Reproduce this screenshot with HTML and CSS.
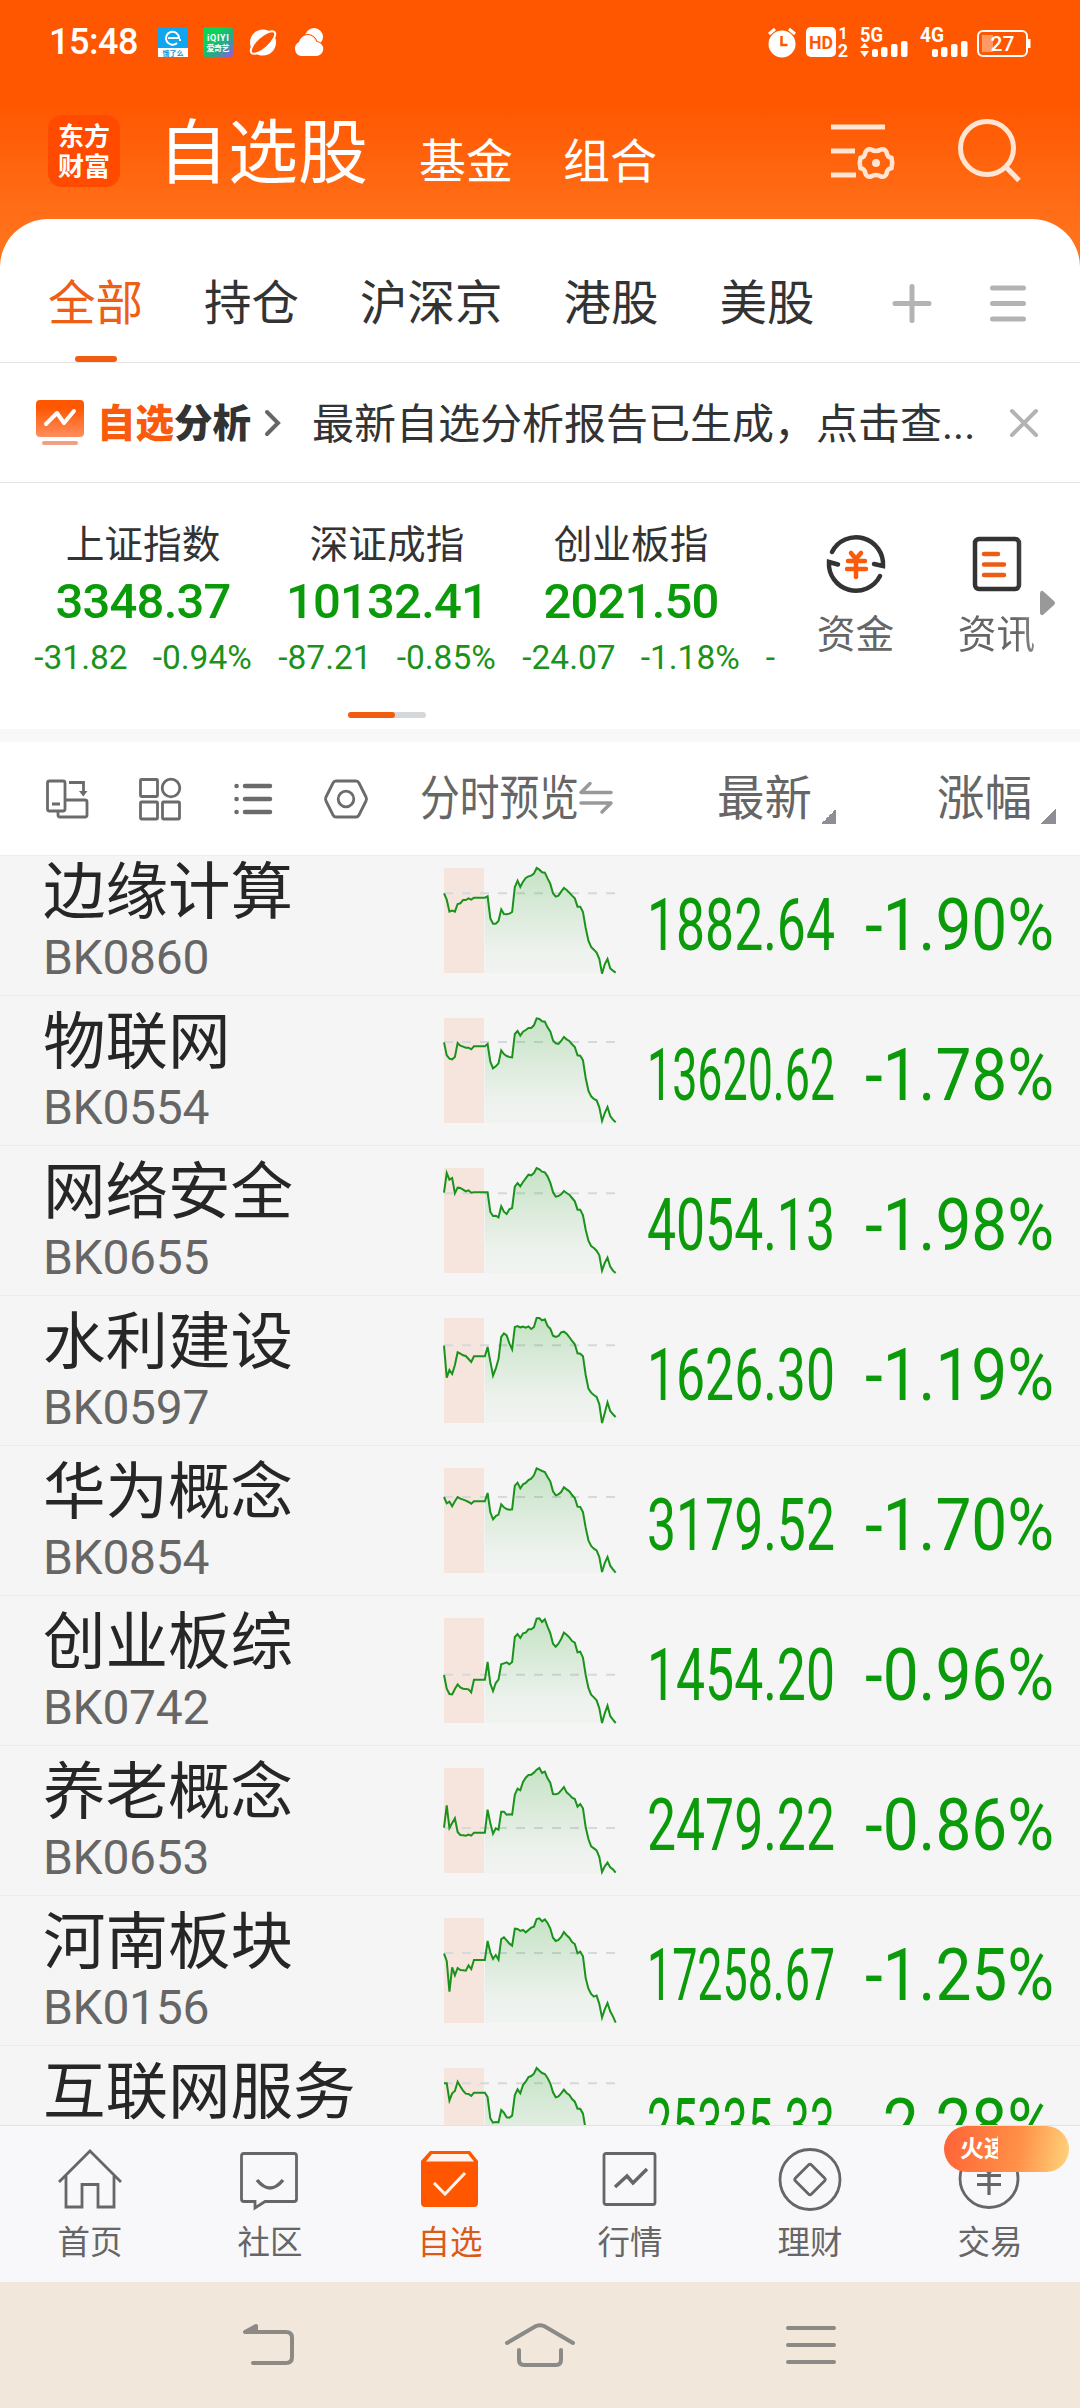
FILE: index.html
```html
<!DOCTYPE html>
<html lang="zh-CN">
<head>
    <meta charset="UTF-8">
    <meta name="viewport" content="width=device-width, initial-scale=1.0">
    <title>自选股</title>
    <link rel="stylesheet" href="styles.css">
</head>
<body>
    <header class="header">
        <div class="status-bar">
            <span class="time">15:48</span>
            <svg class="app-icon" width="30" height="30" viewBox="0 0 30 30">
                <rect width="30" height="30" fill="#fff"/>
                <rect width="30" height="21" fill="#0fa5f0"/>
                <path d="M10 11h11a6.500 6.500 0 1 0-2 5M21 13h2" fill="none" stroke="#fff" stroke-width="2"/>
                <text x="15" y="28.500" font-size="7" font-weight="700" text-anchor="middle" fill="#1593d8">饿了么</text>
            </svg>
            <svg class="app-icon" width="30" height="30" viewBox="0 0 30 30">
                <defs>
                    <linearGradient id="iqiyi" x1="0.3" y1="0.3" x2="1" y2="1">
                        <stop offset="0" stop-color="#0bd35a"/>
                        <stop offset="0.5" stop-color="#2aa58c"/>
                        <stop offset="1" stop-color="#a154e8"/>
                    </linearGradient>
                </defs>
                <rect width="30" height="30" rx="3" fill="url(#iqiyi)"/>
                <text x="15" y="14" font-size="9" font-weight="700" text-anchor="middle" fill="#fff" textLength="22">iQIYI</text>
                <text x="15" y="24" font-size="8" font-weight="700" text-anchor="middle" fill="#fff" textLength="23">爱奇艺</text>
            </svg>
            <svg class="app-icon" width="30" height="30" viewBox="0 0 30 30">
                <circle cx="15" cy="15.500" r="13" fill="#fff"/>
                <ellipse cx="15" cy="15.500" rx="15.500" ry="6" transform="rotate(-42 15 15.500)" fill="#ff5600" stroke="#fff" stroke-width="2"/>
            </svg>
            <svg class="app-icon" width="30" height="30" viewBox="0 0 30 30">
                <circle cx="21" cy="10" r="9" fill="#fff"/>
                <path d="M8 29a7.500 7.500 0 0 1-2-14 9 9 0 0 1 17.500 0A7 7 0 0 1 23 29z" fill="#fff" stroke="#ff5600" stroke-width="2" paint-order="stroke"/>
            </svg>
            <svg class="status-right" width="266" height="34" viewBox="766 25 266 34">
                <g fill="#fff">
                    <circle cx="783" cy="44" r="13.500"/>
                    <path d="M770 34l6-5M796 34l-6-5" stroke="#fff" stroke-width="3"/>
                    <path d="M782.500 36v9h6" fill="none" stroke="#ff5600" stroke-width="2.500"/>
                    <rect x="807" y="27" width="30" height="30" rx="5"/>
                    <text x="822" y="49" font-size="19" font-weight="700" text-anchor="middle" fill="#ff5600" textLength="24" lengthAdjust="spacingAndGlyphs">HD</text>
                    <text x="844" y="39" font-size="16" font-weight="700" text-anchor="middle">1</text>
                    <text x="844" y="57" font-size="18" font-weight="700" text-anchor="middle">2</text>
                    <text x="861" y="42" font-size="20" font-weight="700" textLength="23" lengthAdjust="spacingAndGlyphs">5G</text>
                    <path d="M861 48l4.500-5 4.500 5zM861 51l4.500 6 4.500-6z"/>
                    <rect x="873" y="49" width="6" height="8" rx="2"/>
                    <rect x="882" y="47" width="6.500" height="10" rx="2"/>
                    <rect x="892" y="44" width="6.500" height="13" rx="2"/>
                    <rect x="902" y="41" width="6.500" height="16" rx="2"/>
                    <text x="921" y="42" font-size="20" font-weight="700" textLength="24" lengthAdjust="spacingAndGlyphs">4G</text>
                    <rect x="933" y="49" width="6" height="8" rx="2"/>
                    <rect x="942" y="47" width="6.500" height="10" rx="2"/>
                    <rect x="952" y="44" width="6.500" height="13" rx="2"/>
                    <rect x="962" y="41" width="6.500" height="16" rx="2"/>
                    <rect x="979" y="31" width="49" height="25" rx="5" fill="none" stroke="#fff" stroke-width="2"/>
                    <rect x="983" y="35" width="11" height="17" fill="#ff9a66"/>
                    <rect x="1029" y="39" width="2.500" height="9"/>
                    <text x="1003.500" y="51" font-size="21" font-weight="500" text-anchor="middle">27</text>
                </g>
            </svg>
        </div>
        <div class="title-bar">
            <div class="logo">东方<br>财富</div>
            <h1>自选股</h1>
            <span class="section-link">基金</span>
            <span class="section-link">组合</span>
            <svg class="title-icons" width="196" height="70" viewBox="828 115 196 70" fill="none" stroke="#ffe5d2" stroke-width="5">
                <path d="M831 127h54M831 151h24M831 175h25"/>
                <path d="M871 149.500q5 3 10 0 3.500-1 5.500 2.500.5 5 5 6 1.500 5 0 10-4.500 1-5 6-2 3.500-5.500 2.500-5-3-10 0-3.500 1-5.500-2.500-.5-5-5-6-1.500-5 0-10 4.500-1 5-6 2-3.500 5.500-2.500z" stroke-width="4.500"/>
                <circle cx="876" cy="163" r="4" fill="#ffe5d2" stroke="none"/>
                <circle cx="987" cy="148" r="26.500"/>
                <path d="M1005 166l14 14.500"/>
            </svg>
        </div>
    </header>

    <main class="panel">
        <nav class="tabs">
            <a class="tab active">全部</a>
            <a class="tab">持仓</a>
            <a class="tab">沪深京</a>
            <a class="tab">港股</a>
            <a class="tab">美股</a>
            <svg class="tab-icons" width="138" height="42" viewBox="890 281 138 42" fill="none" stroke="#b3b3b3" stroke-width="5" stroke-linecap="round">
                <path d="M895 302.500h34M912 285.500v34"/>
                <path d="M992.500 287h31M992.500 302.500h31M992.500 318h31"/>
            </svg>
        </nav>

        <section class="notice">
            <svg width="48" height="46" viewBox="0 0 48 46">
                <defs>
                    <linearGradient id="analysis" x1="0" y1="0" x2="0" y2="1">
                        <stop offset="0.200" stop-color="#ff5600"/>
                        <stop offset="1" stop-color="#ff8e5e"/>
                    </linearGradient>
                </defs>
                <rect width="48" height="37" rx="4" fill="url(#analysis)"/>
                <rect x="6" y="41" width="36" height="4" rx="2" fill="#f0a184"/>
                <path d="M10 24l11-11 7 10 10-12" fill="none" stroke="#fff" stroke-width="4" stroke-linecap="round" stroke-linejoin="round"/>
            </svg>
            <strong class="notice-title"><em>自选</em>分析</strong>
            <svg class="notice-arrow" width="18" height="28" viewBox="0 0 18 28" fill="none" stroke="#666" stroke-width="4" stroke-linecap="round">
                <path d="M3 3l11 11L3 25"/>
            </svg>
            <span class="notice-text">最新自选分析报告已生成，点击查...</span>
            <svg class="notice-close" width="30" height="30" viewBox="0 0 30 30" fill="none" stroke="#b3b3b3" stroke-width="4" stroke-linecap="round">
                <path d="M3 3l24 24M27 3L3 27"/>
            </svg>
        </section>

        <section class="market">
            <div class="indexes">
                <div class="index">
                    <h3>上证指数</h3>
                    <b>3348.37</b>
                    <p><span>-31.82</span><span>-0.94%</span></p>
                </div>
                <div class="index">
                    <h3>深证成指</h3>
                    <b>10132.41</b>
                    <p><span>-87.21</span><span>-0.85%</span></p>
                </div>
                <div class="index">
                    <h3>创业板指</h3>
                    <b>2021.50</b>
                    <p><span>-24.07</span><span>-1.18%</span></p>
                </div>
                <div class="index next">
                    <p><span>-</span></p>
                </div>
                <div class="pager"><i></i></div>
            </div>
            <div class="shortcut">
                <svg width="64" height="64" viewBox="0 0 64 64" fill="none" stroke="#333" stroke-width="4.500" stroke-linecap="round">
                    <path d="M8 20a27 27 0 0 1 51 14l-9-2M56 44a27 27 0 0 1-51-14l9 2.500"/>
                    <path d="M27 21l5 6 5-6M24 29h17M23 37h19M32 28v17" stroke="#fa5a0c"/>
                </svg>
                <span>资金</span>
            </div>
            <div class="shortcut fade">
                <svg width="64" height="64" viewBox="0 0 64 64" fill="none" stroke="#333" stroke-width="4.500" stroke-linecap="round">
                    <rect x="10" y="7" width="44" height="50" rx="4"/>
                    <path d="M19 22h14M19 32.500h20M19 43h20" stroke="#ec5c14"/>
                </svg>
                <span>资讯</span>
            </div>
            <svg class="more" width="16" height="26" viewBox="0 0 16 26">
                <path d="M0 3q1-4 4-1l10 9q2 2 0 4l-10 9q-3 3-4-1z" fill="#999"/>
            </svg>
        </section>

        <div class="columns">
            <svg width="330" height="46" viewBox="40 775 330 46" fill="none" stroke="#6b6b6b" stroke-width="2.800">
                <rect x="47.500" y="780" width="17.500" height="30" rx="2"/>
                <path d="M52 803h8M69 781.500h14.500v9"/>
                <path d="M79 790h8.500l-4.200 5.500z" fill="#6b6b6b" stroke="none"/>
                <path d="M66 799h19q2 0 2 2v13q0 2-2 2H60q-2 0-2-2v-3"/>
                <rect x="140.500" y="778.500" width="17" height="17" rx="1"/>
                <circle cx="171" cy="787" r="8.800"/>
                <rect x="140.500" y="801" width="17" height="17" rx="1"/>
                <rect x="162.500" y="801" width="17" height="17" rx="1"/>
                <path d="M245 785h25M245 798h25M245 811h25M236.500 785h.1M236.500 798h.1M236.500 811h.1" stroke-width="4.500" stroke-linecap="round"/>
                <path d="M336 780h20q2 0 3 2l7 14q1 2 0 4l-7 14q-1 2-3 2h-20q-2 0-3-2l-7-14q-1-2 0-4l7-14q1-2 3-2z"/>
                <circle cx="346" cy="798" r="7.800"/>
            </svg>
            <svg class="preview" width="196" height="60" viewBox="420 768 196 60">
                <text x="420" y="814" font-size="48" fill="#666" textLength="159" lengthAdjust="spacingAndGlyphs">分时预览</text>
                <path d="M611 791.500h-30l9-9M581 802h30l-9 9" fill="none" stroke="#999" stroke-width="3.500" stroke-linecap="round" stroke-linejoin="round"/>
            </svg>
            <span class="sort">最新</span>
            <span class="sort">涨幅</span>
        </div>

        <div class="stock-list" id="stockList"></div>
    </main>

    <nav class="bottom-nav">
        <a class="nav-item">
            <svg width="64" height="64" viewBox="0 0 64 64">
                <path d="M1 35L32 4l31 31M8 29v31h16V37.500h16V60h16V29"/>
            </svg>
            首页
        </a>
        <a class="nav-item">
            <svg width="64" height="64" viewBox="0 0 64 64">
                <path d="M6 6.500h50q2.500 0 2.500 2.500v43q0 2.500-2.500 2.500H27L17 61v-6.500H6q-2.500 0-2.500-2.500V9q0-2.500 2.500-2.500z"/>
                <path d="M19 33q13 16 26 0" stroke-width="3.500"/>
            </svg>
            社区
        </a>
        <a class="nav-item active">
            <svg width="64" height="64" viewBox="0 0 64 64">
                <path d="M12 4h40l8 10v42q0 4-4 4H7q-4 0-4-4V14z" fill="#ff5600" stroke="none"/>
                <path d="M14 7h36l6 7.500H8z" fill="#fff3ec" stroke="none"/>
                <path d="M16 36l11 11 20-21" stroke="#fff3ec" stroke-width="3"/>
            </svg>
            自选
        </a>
        <a class="nav-item">
            <svg width="64" height="64" viewBox="0 0 64 64">
                <rect x="6" y="6.500" width="51" height="51" rx="2"/>
                <path d="M17 40l12-11 6 7 14-14" stroke-width="3.500"/>
            </svg>
            行情
        </a>
        <a class="nav-item">
            <svg width="64" height="64" viewBox="0 0 64 64">
                <circle cx="32" cy="32.500" r="30"/>
                <path d="M30.500 18q1.500-1.500 3 0l13 13q1.500 1.500 0 3l-13 13q-1.500 1.500-3 0l-13-13q-1.500-1.500 0-3z"/>
            </svg>
            理财
        </a>
        <a class="nav-item">
            <svg width="64" height="64" viewBox="0 0 64 64">
                <circle cx="31" cy="31.500" r="29"/>
                <path d="M22 15l9 11 9-11M19 28.500h24M19 37.500h24M31 26v22" stroke-width="3.200"/>
            </svg>
            交易
            <span class="badge"><em>火速</em></span>
        </a>
    </nav>

    <div class="system-nav">
        <svg width="52" height="44" viewBox="243 2322 52 44">
            <path d="M246 2331h40q6 0 6 6v19q0 6-6 6h-33"/>
            <path d="M245 2331l11-6v5z"/>
        </svg>
        <svg width="72" height="46" viewBox="505 2321 72 46">
            <path d="M508 2342l29-17q4-1.500 8 0l29 17M520 2349v10q0 5 5 5h32q5 0 5-5v-10"/>
        </svg>
        <svg width="54" height="40" viewBox="784 2325 54 40">
            <path d="M788 2328h46M788 2345h46M788 2362h46"/>
        </svg>
    </div>

    <script>
        const stocks = [
            { name: '边缘计算', code: 'BK0860', price: '1882.64', change: '-1.90%', base: 76, points: [76,95,131,128,131,108,106,96,96,91,95,89,89,89,89,89,85,151,167,167,159,124,138,139,137,132,57,38,57,41,30,25,23,17,0,5,13,14,31,47,76,86,83,71,60,66,74,83,91,116,116,132,180,218,237,245,254,273,317,289,273,301,308,314] },
            { name: '物联网', code: 'BK0554', price: '13620.62', change: '-1.78%', base: 72, points: [73,112,122,124,117,75,83,86,89,89,94,85,85,85,85,85,78,131,151,145,136,97,108,114,117,118,48,39,53,41,36,30,30,22,1,3,10,11,28,40,67,76,78,69,57,64,69,79,87,112,113,127,180,218,235,243,247,268,309,285,267,294,305,313] },
            { name: '网络安全', code: 'BK0655', price: '4054.13', change: '-1.98%', base: 76, points: [74,15,35,30,76,59,60,65,70,67,74,73,73,73,73,73,73,132,144,143,148,115,131,138,124,120,56,45,55,42,31,20,22,15,0,4,11,13,25,44,72,86,84,79,69,75,80,90,100,125,125,142,185,218,234,240,248,262,308,285,269,296,308,315] },
            { name: '水利建设', code: 'BK0597', price: '1626.30', change: '-1.19%', base: 82, points: [83,179,156,168,141,103,107,112,114,123,132,115,115,115,115,115,87,130,173,152,123,57,46,52,76,94,27,24,28,26,29,25,33,27,0,0,7,4,24,32,53,57,54,43,41,47,57,69,79,106,107,115,171,212,224,231,237,259,315,285,253,279,289,297] },
            { name: '华为概念', code: 'BK0854', price: '3179.52', change: '-1.70%', base: 87, points: [87,106,101,115,100,87,92,95,98,102,107,100,100,100,100,100,75,133,154,144,140,109,118,123,125,124,53,44,61,49,45,36,32,22,1,5,9,12,27,40,70,82,79,72,58,64,70,81,90,116,117,132,179,217,234,242,247,267,312,285,267,293,304,314] },
            { name: '创业板综', code: 'BK0742', price: '1454.20', change: '-0.96%', base: 170, points: [171,212,228,229,213,199,208,212,213,214,223,185,185,185,185,185,132,197,219,195,185,139,136,133,139,132,57,48,60,46,44,34,34,28,2,1,12,4,26,45,77,86,77,63,44,50,58,69,74,103,101,119,171,210,230,238,247,271,315,286,263,294,305,315] },
            { name: '养老概念', code: 'BK0653', price: '2479.22', change: '-0.86%', base: 180, points: [179,112,180,165,151,192,201,202,203,200,203,194,194,194,194,194,125,166,197,181,185,131,131,140,139,140,80,62,67,42,29,21,20,14,5,0,15,11,31,44,78,79,76,67,57,73,80,89,93,116,108,121,178,213,235,241,247,267,312,295,284,298,304,314] },
            { name: '河南板块', code: 'BK0156', price: '17258.67', change: '-1.25%', base: 105, points: [107,129,221,148,172,150,156,157,158,142,153,126,126,126,126,126,69,103,123,111,125,63,58,67,77,83,32,33,39,36,43,36,29,26,3,1,10,4,15,31,59,69,66,57,42,52,59,72,78,106,101,115,180,212,228,236,233,258,299,274,255,280,295,314] },
            { name: '互联网服务', code: 'BK0855', price: '25335.33', change: '-2.28%', base: 46, points: [46,46,98,76,69,41,55,68,77,78,84,74,74,74,74,74,87,151,164,162,163,126,134,148,149,143,81,64,76,51,41,27,24,17,0,8,15,18,30,46,73,88,85,76,65,75,81,93,101,122,122,137,185,218,234,240,248,262,308,285,269,296,308,315] }
        ];

        function drawChart(stock) {
            const step = 515 / (stock.points.length - 1);
            const coords = stock.points.map((y, i) => [(i * step).toFixed(1), y]);
            const line = coords.map(p => p.join(',')).join(' ');
            // the shaded area starts after the call auction block
            const area = coords.slice(15).map(p => p.join(',')).join(' ');
            return `
                <svg class="chart" width="172" height="105" viewBox="0 0 516 315">
                    <defs>
                        <linearGradient id="area" gradientUnits="userSpaceOnUse" x1="0" y1="0" x2="0" y2="315">
                            <stop offset="0" stop-color="#0a9a0a" stop-opacity="0.2"/>
                            <stop offset="0.8" stop-color="#0a9a0a" stop-opacity="0.03"/>
                            <stop offset="1" stop-color="#0a9a0a" stop-opacity="0.02"/>
                        </linearGradient>
                    </defs>
                    <rect width="120" height="315" fill="#f5e5dd"/>
                    <path d="M0 ${stock.base}H516" stroke="#d5d8dc" stroke-width="6" stroke-dasharray="27 27"/>
                    <polygon points="122,315 ${area} 515,315" fill="url(#area)"/>
                    <polyline points="${line}" fill="none" stroke="#1a921c" stroke-width="6"/>
                </svg>`;
        }

        document.getElementById('stockList').innerHTML = stocks.map(stock => `
            <div class="stock">
                <div class="stock-name">
                    <h2>${stock.name}</h2>
                    <p>${stock.code}</p>
                </div>
                ${drawChart(stock)}
                <svg class="figures" width="410" height="80" viewBox="0 0 410 80">
                    <text x="-1" y="65.500" textLength="188" lengthAdjust="spacingAndGlyphs">${stock.price}</text>
                    <text x="217" y="65.500" textLength="189" lengthAdjust="spacingAndGlyphs">${stock.change}</text>
                </svg>
            </div>`).join('');
    </script>
</body>
</html>
```
FILE: styles.css
```css
* {
    margin: 0;
    padding: 0;
    box-sizing: border-box;
}

body {
    width: 1080px;
    height: 2408px;
    overflow: hidden;
    display: flex;
    flex-direction: column;
    font-family: Roboto, "Noto Sans CJK SC", sans-serif;
    color: #333;
    background: #f5f5f5;
}

svg {
    display: block;
    flex: none;
    overflow: visible;
}

em, i {
    font-style: normal;
}

/* Header */
.header {
    height: 270px;
    flex: none;
    background: linear-gradient(#ff5600 100px, #ff6e17 210px, #ff741f 270px);
    color: #fff;
}

.status-bar {
    height: 84px;
    padding: 0 49px;
    display: flex;
    align-items: center;
}

.time {
    width: 109px;
    font-size: 36px;
    font-weight: 500;
    letter-spacing: -0.5px;
}

.app-icon {
    margin-right: 15px;
}

.status-right {
    margin-left: auto;
}

.title-bar {
    height: 120px;
    padding: 0 56px 0 48px;
    display: flex;
    align-items: baseline;
}

.logo {
    width: 72px;
    height: 72px;
    padding-top: 7px;
    align-self: flex-start;
    margin: 31px 38px 0 0;
    border-radius: 14px;
    background: #ff4a00;
    font-size: 26px;
    font-weight: 700;
    line-height: 30px;
    text-align: center;
}

.title-bar h1 {
    font-size: 70px;
    font-weight: 400;
    line-height: 140px;
    margin-right: 51px;
}

.section-link {
    font-size: 47px;
    margin-right: 50px;
}

.title-icons {
    align-self: flex-start;
    margin: 31px 0 0 auto;
}

/* White panel */
.panel {
    height: 1906px;
    flex: none;
    margin-top: -51px;
    display: flex;
    flex-direction: column;
    background: #fff;
    border-radius: 48px 48px 0 0;
    overflow: hidden;
}

.tabs {
    height: 144px;
    flex: none;
    padding: 0 52px 0 48px;
    display: flex;
    align-items: center;
    gap: 61px;
    border-bottom: 1px solid #e4e4e4;
    font-size: 47.5px;
}

.tab {
    height: 143px;
    line-height: 171px;
}

.tab.active {
    color: #ec5f14;
}

.tab.active::after {
    content: "";
    display: block;
    width: 42px;
    height: 6px;
    margin: -34px auto 0;
    border-radius: 3px;
    background: #f25c0f;
}

.tab-icons {
    margin: 24px 0 0 auto;
}

.notice {
    height: 120px;
    flex: none;
    padding: 0 41px 0 36px;
    display: flex;
    align-items: center;
    border-bottom: 1px solid #e4e4e4;
}

.notice-title {
    margin: -5px 0 0 13px;
    font-size: 38.5px;
    font-weight: 900;
}

.notice-title em {
    color: #fa5a0c;
}

.notice-arrow {
    margin-left: 13px;
}

.notice-text {
    margin: -5px 0 0 30px;
    font-size: 42px;
}

.notice-close {
    margin-left: auto;
}

.market {
    height: 247px;
    flex: none;
    padding-left: 21px;
    display: flex;
    border-bottom: 1px solid #f7f8fa;
}

.indexes {
    width: 755px;
    height: 246px;
    display: flex;
    flex-wrap: wrap;
    align-content: flex-start;
    overflow: hidden;
}

.index {
    width: 244px;
    height: 229px;
    padding-top: 34px;
    text-align: center;
}

.index h3 {
    font-size: 38.7px;
    font-weight: 400;
    line-height: 56px;
}

.index b {
    display: block;
    font-size: 49px;
    font-weight: 500;
    line-height: 58px;
    letter-spacing: -0.8px;
    color: #0a9a0a;
}

.index p {
    display: flex;
    justify-content: center;
    gap: 25px;
    font-size: 33.5px;
    line-height: 54px;
    color: #1a921c;
}

.index.next {
    width: 23px;
    padding: 148px 0 0 12px;
}

.pager {
    width: 78px;
    height: 6px;
    margin-left: 327px;
    border-radius: 3px;
    background: #d5d8db;
}

.pager i {
    display: block;
    width: 47px;
    height: 6px;
    border-radius: 3px;
    background: #f25c0f;
}

.shortcut {
    width: 141px;
    padding: 49px 0 0 18px;
    display: flex;
    flex-direction: column;
    align-items: center;
    font-size: 38.7px;
    color: #666;
}

.shortcut span {
    margin-top: 13px;
    line-height: 52px;
}

.fade {
    -webkit-mask-image: linear-gradient(90deg, #000 70%, rgba(0, 0, 0, 0.5) 100%);
    mask-image: linear-gradient(90deg, #000 70%, rgba(0, 0, 0, 0.5) 100%);
}

.more {
    margin: 107px 0 0 -18px;
}

.columns {
    height: 126px;
    flex: none;
    padding: 0 24px 0 40px;
    display: flex;
    align-items: center;
    border-top: 12px solid #f7f8fa;
    border-bottom: 1px solid #ececec;
}

.preview {
    margin-left: 50px;
}

.sort {
    display: flex;
    align-items: flex-end;
    gap: 9px;
    margin-left: auto;
    font-size: 47.5px;
    line-height: 58px;
    color: #666;
}

.sort::after {
    content: "";
    width: 15px;
    height: 15px;
    margin-bottom: 4px;
    background: linear-gradient(135deg, transparent 50%, #8e8e96 50%);
}

/* Stock list, scrolled by 10px */
.stock-list {
    flex: 1;
    overflow: hidden;
    background: #f5f5f5;
}

.stock {
    height: 150px;
    padding-left: 43px;
    display: flex;
    border-bottom: 1px solid #ebebeb;
}

.stock:first-child {
    margin-top: -10px;
}

.stock-name {
    width: 401px;
    padding-top: 10px;
}

.stock-name h2 {
    font-size: 62.5px;
    font-weight: 400;
    line-height: 74px;
    color: #262626;
}

.stock-name p {
    font-size: 48px;
    line-height: 56px;
    letter-spacing: -0.3px;
    color: #666;
}

.chart {
    margin-top: 22px;
}

.figures {
    margin: 38px 0 0 32px;
    font-size: 72px;
    fill: #0a9a0a;
}

/* Bottom navigation */
.bottom-nav {
    height: 157px;
    flex: none;
    display: flex;
    background: #f8f8fa;
    border-top: 1px solid #e2e2e2;
}

.nav-item {
    position: relative;
    width: 180px;
    padding-top: 21px;
    display: flex;
    flex-direction: column;
    align-items: center;
    font-size: 32.5px;
    line-height: 64px;
    color: #666;
}

.nav-item svg {
    fill: none;
    stroke: #666;
    stroke-width: 2.8;
}

.nav-item.active {
    color: #dc5a18;
}

.badge {
    position: absolute;
    top: 0;
    right: 11px;
    width: 125px;
    height: 46px;
    padding-left: 16px;
    border-radius: 23px;
    background: linear-gradient(100deg, #ff6237, #ff9148 60%, #ffd57c);
    color: #fff;
    font-size: 24px;
    font-weight: 700;
    line-height: 47px;
}

.badge em {
    display: block;
    width: 38px;
    overflow: hidden;
    white-space: nowrap;
}

/* Android buttons */
.system-nav {
    height: 126px;
    flex: none;
    padding: 0 242px 0 243px;
    display: flex;
    align-items: center;
    justify-content: space-between;
    background: #f1e7db;
}

.system-nav svg {
    fill: none;
    stroke: #8c8a86;
    stroke-width: 4;
    stroke-linecap: round;
    stroke-linejoin: round;
}
```
